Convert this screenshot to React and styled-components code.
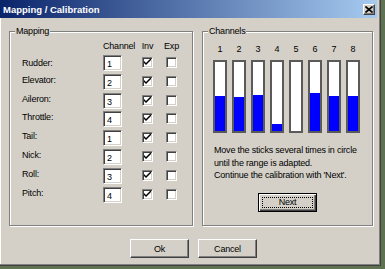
import React from "react";
import styled, { createGlobalStyle } from "styled-components";

const GlobalStyle = createGlobalStyle`
  html, body {
    margin: 0;
    padding: 0;
    background: #5f7352;
    overflow: hidden;
  }
  body {
    font-family: "Liberation Sans", Arial, sans-serif;
    font-size: 9px;
    letter-spacing: -0.2px;
    color: #000;
  }
`;

const mappings = [
  { name: "Rudder:", channel: 1 },
  { name: "Elevator:", channel: 2 },
  { name: "Aileron:", channel: 3 },
  { name: "Throttle:", channel: 4 },
  { name: "Tail:", channel: 1 },
  { name: "Nick:", channel: 2 },
  { name: "Roll:", channel: 3 },
  { name: "Pitch:", channel: 4 },
];

const levels = [51, 49, 52, 10, 0, 55, 51, 51];

const App = () => {
  return (
    <>
      <GlobalStyle />
      <Window>
        <TitleBar>
          <Title>Mapping / Calibration</Title>
          <CloseButton>
            <svg width="8" height="7" viewBox="0 0 8 7">
              <path d="M0.5 0.5 L7.5 6.5 M7.5 0.5 L0.5 6.5" stroke="#000" strokeWidth="1.6" />
            </svg>
          </CloseButton>
        </TitleBar>
        <Body>
          <Groups>
            <GroupBox $width={184}>
              <Legend>Mapping</Legend>
              <MapGrid>
                <span />
                <HeadText>Channel</HeadText>
                <HeadCell>Inv</HeadCell>
                <HeadCell>Exp</HeadCell>
                {mappings.map((m) => (
                  <React.Fragment key={m.name}>
                    <RowLabel>{m.name}</RowLabel>
                    <Edit>{m.channel}</Edit>
                    <CheckBox>
                      <svg width="7" height="7" viewBox="0 0 7 7">
                        <path d="M0 2 L0 4 L2 6 L7 1 L7 -1 L2 4 Z" fill="#000" />
                      </svg>
                    </CheckBox>
                    <CheckBox />
                  </React.Fragment>
                ))}
              </MapGrid>
            </GroupBox>
            <GroupBox $width={171}>
              <Legend>Channels</Legend>
              <ChannelArea>
                <BarGrid>
                  {levels.map((_, i) => (
                    <BarNumber key={"n" + i}>{i + 1}</BarNumber>
                  ))}
                  {levels.map((lvl, i) => (
                    <Bar key={"b" + i}>
                      <Fill style={{ height: `${lvl}%` }} />
                    </Bar>
                  ))}
                </BarGrid>
                <Hint>
                  Move the sticks several times in circle
                  <br />
                  until the range is adapted.
                  <br />
                  Continue the calibration with 'Next'.
                </Hint>
                <NextWrap>
                  <Button $default>
                    <Focus>Next</Focus>
                  </Button>
                </NextWrap>
              </ChannelArea>
            </GroupBox>
          </Groups>
          <ButtonRow>
            <Button>Ok</Button>
            <Button>Cancel</Button>
          </ButtonRow>
        </Body>
      </Window>
    </>
  );
};

const Window = styled.div`
  width: 381px;
  height: 266px;
  box-sizing: border-box;
  background: #d4d0c8;
  border-right: 1px solid #404040;
  border-bottom: 1px solid #404040;
  box-shadow: inset -1px -1px 0 #808080, inset 1px 0 0 #fff;
  display: flex;
  flex-direction: column;
`;

const TitleBar = styled.div`
  height: 18px;
  margin-right: 3px;
  background: linear-gradient(to right, #0a246a, #a6caf0);
  display: flex;
  align-items: center;
  justify-content: space-between;
  padding: 0 2px 0 3px;
`;

const Title = styled.span`
  font-weight: bold;
  font-size: 9.5px;
  letter-spacing: 0;
  color: #fff;
`;

const CloseButton = styled.div`
  width: 12px;
  height: 11px;
  box-sizing: border-box;
  background: #d4d0c8;
  border: 1px solid;
  border-color: #fff #404040 #404040 #fff;
  box-shadow: inset -1px -1px 0 #808080;
  display: flex;
  align-items: center;
  justify-content: center;
  margin-top: 1px;
`;

const Body = styled.div`
  padding: 13px 0 0 9px;
  display: flex;
  flex-direction: column;
`;

const Groups = styled.div`
  display: flex;
  gap: 9px;
`;

const GroupBox = styled.div`
  position: relative;
  width: ${(p) => p.$width}px;
  height: 195px;
  box-sizing: border-box;
  border: 1px solid #808080;
  box-shadow: 1px 1px 0 #fff, inset 1px 1px 0 #fff;
`;

const Legend = styled.span`
  position: absolute;
  top: -7px;
  left: 5px;
  padding: 0 1px;
  background: #d4d0c8;
  line-height: 12px;
`;

const MapGrid = styled.div`
  display: grid;
  grid-template-columns: 81px 39px 24px 24px;
  grid-template-rows: 12px;
  grid-auto-rows: 16px;
  row-gap: 2.86px;
  padding: 8px 0 0 12px;
  & > :nth-child(5) {
    margin-top: 2px;
  }
`;

const HeadText = styled.span`
  line-height: 12px;
  white-space: nowrap;
`;

const HeadCell = styled.span`
  width: 11px;
  display: flex;
  justify-content: center;
  line-height: 12px;
  white-space: nowrap;
`;

const RowLabel = styled.span`
  line-height: 12px;
  align-self: start;
`;

const Edit = styled.div`
  width: 19px;
  height: 16px;
  box-sizing: border-box;
  background: #fff;
  border: 1px solid;
  border-color: #808080 #fff #fff #808080;
  box-shadow: inset 1px 1px 0 #404040, inset -1px -1px 0 #d4d0c8;
  padding: 2px 0 0 3px;
  line-height: 12px;
`;

const CheckBox = styled.div`
  width: 11px;
  height: 11px;
  box-sizing: border-box;
  margin-top: 2px;
  background: #fff;
  border: 1px solid;
  border-color: #808080 #fff #fff #808080;
  box-shadow: inset 1px 1px 0 #404040, inset -1px -1px 0 #d4d0c8;
  display: flex;
  align-items: center;
  justify-content: center;
`;

const ChannelArea = styled.div`
  padding: 11px 0 0 10px;
  display: flex;
  flex-direction: column;
`;

const BarGrid = styled.div`
  display: grid;
  grid-template-columns: repeat(8, 14px);
  grid-template-rows: 12px 73px;
  column-gap: 5px;
  row-gap: 5px;
`;

const BarNumber = styled.span`
  text-align: center;
  line-height: 12px;
`;

const Bar = styled.div`
  box-sizing: border-box;
  background: #fff;
  border: 2px solid #5a5a5a;
  display: flex;
  flex-direction: column;
  justify-content: flex-end;
`;

const Fill = styled.div`
  background: #0000ff;
`;

const Hint = styled.p`
  margin: 11px 0 0 1px;
  line-height: 12.6px;
  white-space: nowrap;
`;

const NextWrap = styled.div`
  display: flex;
  justify-content: center;
  margin: 11px 10px 0 0;
`;

const Button = styled.div`
  width: 59px;
  height: 19px;
  box-sizing: border-box;
  background: #d4d0c8;
  border: 1px solid;
  border-color: ${(p) => (p.$default ? "#000" : "#fff #404040 #404040 #fff")};
  box-shadow: ${(p) =>
    p.$default
      ? "inset 1px 1px 0 #fff, inset -1px -1px 0 #404040, inset -2px -2px 0 #808080"
      : "inset -1px -1px 0 #808080"};
  display: flex;
  align-items: center;
  justify-content: center;
  padding: ${(p) => (p.$default ? "3px" : "0")};
`;

const Focus = styled.span`
  flex: 1;
  align-self: stretch;
  display: flex;
  align-items: center;
  justify-content: center;
  border: 1px dotted #000;
`;

const ButtonRow = styled.div`
  display: flex;
  gap: 9px;
  margin-top: 13px;
  padding-left: 121px;
`;

export default App;
